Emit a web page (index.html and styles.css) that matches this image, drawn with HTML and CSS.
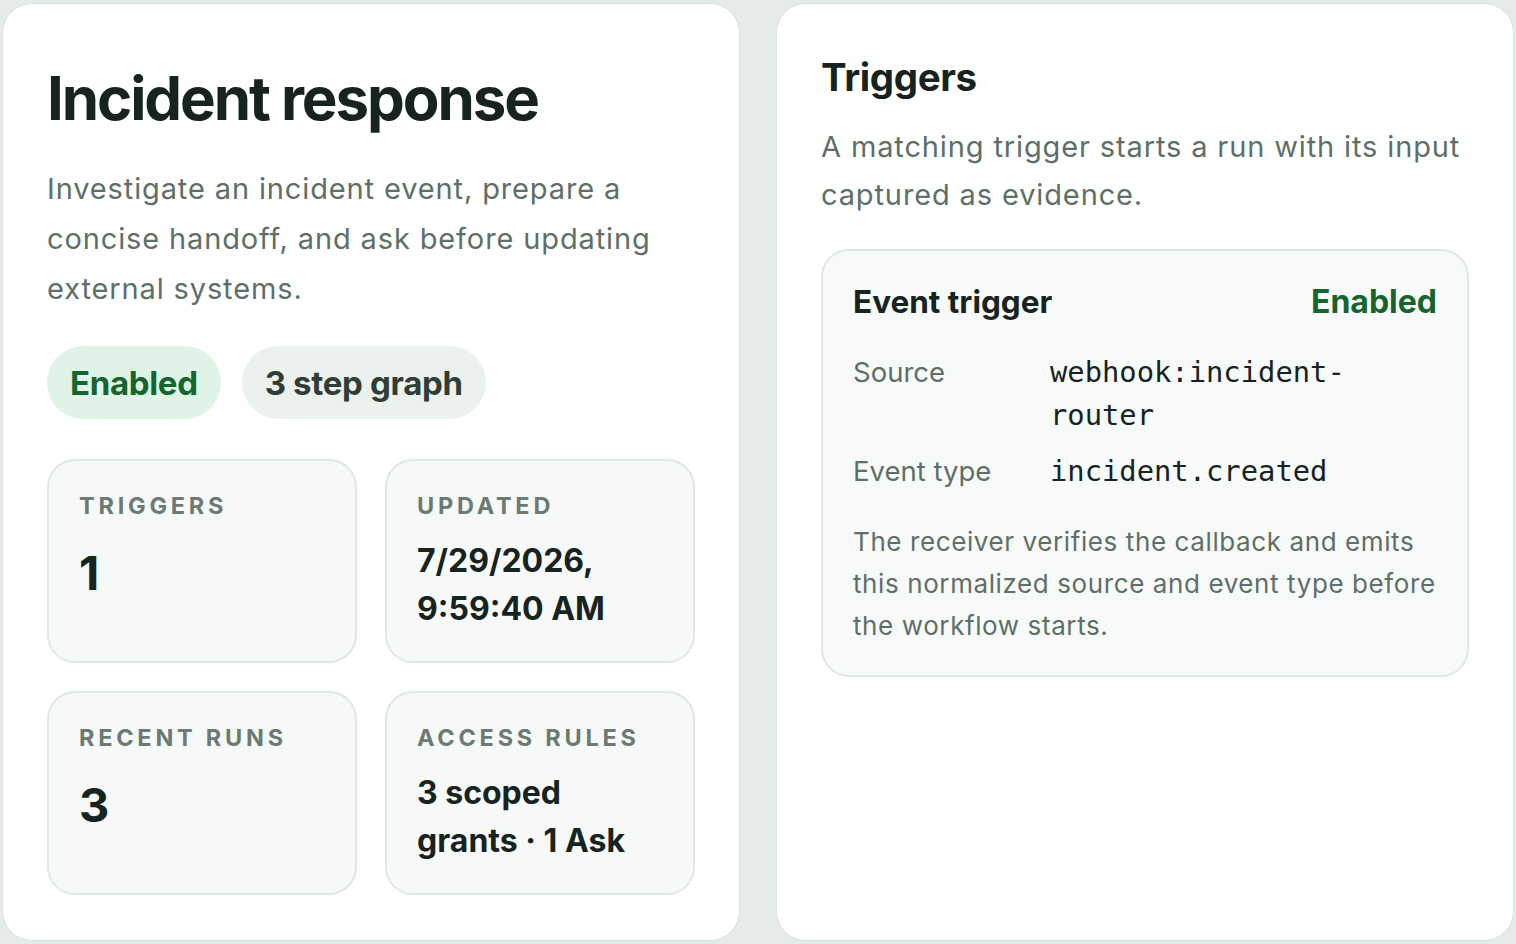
FILE: index.html
```html
<!DOCTYPE html>
<html lang="en">
<head>
  <meta charset="UTF-8">
  <meta name="viewport" content="width=device-width, initial-scale=1.0">
  <title>Incident response</title>
  <link rel="stylesheet" href="styles.css">
</head>
<body>
  <main class="layout">
    <!-- Workflow summary -->
    <section class="panel summary">
      <h1>Incident response</h1>
      <p class="lead">Investigate an incident event, prepare a concise handoff, and ask before updating external systems.</p>
      <div class="pills">
        <span class="pill pill-ok">Enabled</span>
        <span class="pill">3 step graph</span>
      </div>
      <div class="stats">
        <div class="stat">
          <div class="stat-label">Triggers</div>
          <div class="stat-value big">1</div>
        </div>
        <div class="stat">
          <div class="stat-label">Updated</div>
          <div class="stat-value">7/29/2026, 9:59:40 AM</div>
        </div>
        <div class="stat">
          <div class="stat-label">Recent runs</div>
          <div class="stat-value big">3</div>
        </div>
        <div class="stat">
          <div class="stat-label">Access rules</div>
          <div class="stat-value">3 scoped grants · 1 Ask</div>
        </div>
      </div>
    </section>

    <!-- Triggers -->
    <section class="panel triggers">
      <h2>Triggers</h2>
      <p class="lead small">A matching trigger starts a run with its input captured as evidence.</p>
      <div class="trigger-box">
        <div class="trigger-head">
          <h3>Event trigger</h3>
          <span class="state">Enabled</span>
        </div>
        <dl class="fields">
          <dt>Source</dt>
          <dd><code>webhook:incident-router</code></dd>
          <dt>Event type</dt>
          <dd><code>incident.created</code></dd>
        </dl>
        <p class="note">The receiver verifies the callback and emits this normalized source and event type before the workflow starts.</p>
      </div>
    </section>
  </main>
</body>
</html>
```

FILE: styles.css
```css
/* General */
body {
  margin: 0;
  padding: 3px 2px;
  height: 100vh;
  box-sizing: border-box;
  background-color: #e5ebe8;
  font-family: Inter, "Noto Sans", sans-serif;
  color: #17231e;
}

.layout {
  display: grid;
  grid-template-columns: 1fr 1fr;
  gap: 36px;
  height: 100%;
}

/* Cards */
.panel {
  background-color: #fff;
  border: 1px solid #dbe3df;
  border-radius: 30px;
  padding: 44px 44px;
  box-sizing: border-box;
}

h1 {
  margin: 17px 0 0;
  font-size: 60px;
  line-height: 66px;
  font-weight: 700;
  letter-spacing: -0.035em;
}

h2 {
  margin: 6px 0 0;
  font-size: 38.5px;
  line-height: 46px;
  font-weight: 700;
  letter-spacing: -0.01em;
}

.lead {
  margin: 33px 0 0;
  font-size: 29px;
  line-height: 50px;
  letter-spacing: 0.03em;
  color: #5d6f67;
}

.lead.small {
  margin-top: 23px;
  line-height: 48px;
}

/* Pills */
.pills {
  display: flex;
  gap: 21px;
  margin-top: 32px;
}

.pill {
  display: inline-flex;
  align-items: center;
  height: 73px;
  padding: 0 23px;
  border-radius: 37px;
  background-color: #ebf1ed;
  color: #2f3d36;
  font-size: 33px;
  font-weight: 700;
  letter-spacing: -0.01em;
}

.pill-ok {
  background-color: #dff3e6;
  color: #15652f;
}

/* Stat cards */
.stats {
  display: grid;
  grid-template-columns: 1fr 1fr;
  gap: 28px;
  margin-top: 40px;
  width: 648px;
}

.stat {
  background-color: #f7f9f8;
  border: 2px solid #e0e8e4;
  border-radius: 28px;
  padding: 30px 30px 28px;
  min-height: 204px;
  box-sizing: border-box;
}

.stat-label {
  font-size: 23.5px;
  font-weight: 700;
  letter-spacing: 0.16em;
  text-transform: uppercase;
  color: #6b7a73;
  line-height: 30px;
}

.stat-value {
  margin-top: 16px;
  font-size: 32px;
  line-height: 48px;
  font-weight: 700;
  color: #17231e;
}

.stat-value.big {
  font-size: 47px;
  line-height: 72px;
}

/* Trigger box */
.trigger-box {
  margin-top: 30px;
  background-color: #f8faf9;
  border: 2px solid #e0e8e4;
  border-radius: 28px;
  padding: 30px 30px 28px;
}

.trigger-head {
  display: flex;
  justify-content: space-between;
  align-items: baseline;
}

h3 {
  margin: 0;
  font-size: 31.5px;
  font-weight: 700;
  line-height: 42px;
}

.state {
  font-size: 32px;
  font-weight: 700;
  color: #15652f;
}

.fields {
  display: grid;
  grid-template-columns: 181px minmax(0, 370px);
  column-gap: 16px;
  row-gap: 13px;
  margin: 28px 0 0;
}

.fields dt {
  font-size: 27.5px;
  line-height: 43px;
  color: #5d6f67;
}

.fields dd {
  margin: 0;
  line-height: 43px;
}

code {
  display: block;
  font-family: "DejaVu Sans Mono", monospace;
  font-size: 28.8px;
  line-height: 43px;
  color: #17231e;
}

.note {
  margin: 28px 0 0;
  font-size: 26px;
  line-height: 42px;
  letter-spacing: 0.023em;
  color: #5d6f67;
}
```
